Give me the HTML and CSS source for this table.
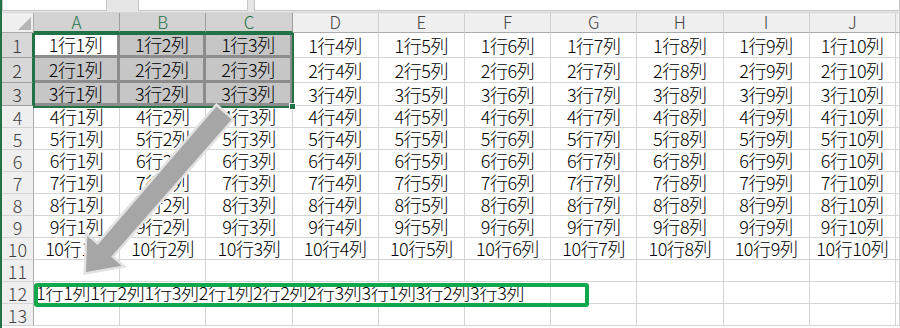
FILE: index.html
```html
<!DOCTYPE html>
<html lang="ja">
<head>
<meta charset="utf-8">
<title>Sheet</title>
<link rel="stylesheet" href="styles.css">
</head>
<body>
<div class="screen">
  <div class="app">
    <div class="topbar">
      <div class="tb-box namebox"></div>
      <div class="tb-box fxbox"></div>
      <div class="tb-box formula"></div>
    </div>
    <div class="sheet">
      <div class="corner"></div>
      <div class="ch sel">A</div><div class="ch sel">B</div><div class="ch sel">C</div><div class="ch">D</div><div class="ch">E</div><div class="ch">F</div><div class="ch">G</div><div class="ch">H</div><div class="ch">I</div><div class="ch">J</div><div class="ch end"></div>

      <div class="rh sel">1</div>
      <div class="c act">1行1列</div><div class="c s">1行2列</div><div class="c s">1行3列</div><div class="c">1行4列</div><div class="c">1行5列</div><div class="c">1行6列</div><div class="c">1行7列</div><div class="c">1行8列</div><div class="c">1行9列</div><div class="c">1行10列</div><div class="c"></div>

      <div class="rh sel">2</div>
      <div class="c s">2行1列</div><div class="c s">2行2列</div><div class="c s">2行3列</div><div class="c">2行4列</div><div class="c">2行5列</div><div class="c">2行6列</div><div class="c">2行7列</div><div class="c">2行8列</div><div class="c">2行9列</div><div class="c">2行10列</div><div class="c"></div>

      <div class="rh sel">3</div>
      <div class="c s">3行1列</div><div class="c s">3行2列</div><div class="c s">3行3列</div><div class="c">3行4列</div><div class="c">3行5列</div><div class="c">3行6列</div><div class="c">3行7列</div><div class="c">3行8列</div><div class="c">3行9列</div><div class="c">3行10列</div><div class="c"></div>

      <div class="rh">4</div>
      <div class="c">4行1列</div><div class="c">4行2列</div><div class="c">4行3列</div><div class="c">4行4列</div><div class="c">4行5列</div><div class="c">4行6列</div><div class="c">4行7列</div><div class="c">4行8列</div><div class="c">4行9列</div><div class="c">4行10列</div><div class="c"></div>

      <div class="rh">5</div>
      <div class="c">5行1列</div><div class="c">5行2列</div><div class="c">5行3列</div><div class="c">5行4列</div><div class="c">5行5列</div><div class="c">5行6列</div><div class="c">5行7列</div><div class="c">5行8列</div><div class="c">5行9列</div><div class="c">5行10列</div><div class="c"></div>

      <div class="rh">6</div>
      <div class="c">6行1列</div><div class="c">6行2列</div><div class="c">6行3列</div><div class="c">6行4列</div><div class="c">6行5列</div><div class="c">6行6列</div><div class="c">6行7列</div><div class="c">6行8列</div><div class="c">6行9列</div><div class="c">6行10列</div><div class="c"></div>

      <div class="rh">7</div>
      <div class="c">7行1列</div><div class="c">7行2列</div><div class="c">7行3列</div><div class="c">7行4列</div><div class="c">7行5列</div><div class="c">7行6列</div><div class="c">7行7列</div><div class="c">7行8列</div><div class="c">7行9列</div><div class="c">7行10列</div><div class="c"></div>

      <div class="rh">8</div>
      <div class="c">8行1列</div><div class="c">8行2列</div><div class="c">8行3列</div><div class="c">8行4列</div><div class="c">8行5列</div><div class="c">8行6列</div><div class="c">8行7列</div><div class="c">8行8列</div><div class="c">8行9列</div><div class="c">8行10列</div><div class="c"></div>

      <div class="rh">9</div>
      <div class="c">9行1列</div><div class="c">9行2列</div><div class="c">9行3列</div><div class="c">9行4列</div><div class="c">9行5列</div><div class="c">9行6列</div><div class="c">9行7列</div><div class="c">9行8列</div><div class="c">9行9列</div><div class="c">9行10列</div><div class="c"></div>

      <div class="rh">10</div>
      <div class="c">10行1列</div><div class="c">10行2列</div><div class="c">10行3列</div><div class="c">10行4列</div><div class="c">10行5列</div><div class="c">10行6列</div><div class="c">10行7列</div><div class="c">10行8列</div><div class="c">10行9列</div><div class="c">10行10列</div><div class="c"></div>

      <div class="rh">11</div>
      <div class="c"></div><div class="c"></div><div class="c"></div><div class="c"></div><div class="c"></div><div class="c"></div><div class="c"></div><div class="c"></div><div class="c"></div><div class="c"></div><div class="c"></div>

      <div class="rh">12</div>
      <div class="c wide">1行1列1行2列1行3列2行1列2行2列2行3列3行1列3行2列3行3列</div><div class="c"></div><div class="c"></div><div class="c"></div><div class="c"></div><div class="c"></div>

      <div class="rh">13</div>
      <div class="c"></div><div class="c"></div><div class="c"></div><div class="c"></div><div class="c"></div><div class="c"></div><div class="c"></div><div class="c"></div><div class="c"></div><div class="c"></div><div class="c"></div>
    </div>
  </div>

  <div class="selbox"></div>
  <div class="handle"></div>
  <div class="hl"></div>
  <svg class="arrow" width="900" height="328" viewBox="0 0 900 328" xmlns="http://www.w3.org/2000/svg">
    <polygon points="216.5,106.5 231.5,119.5 111.2,256.8 121.5,265.8 86,272 87.3,236.0 97.6,245.0"
      fill="#a6a6a6" stroke="#e2e2e2" stroke-width="5" stroke-linejoin="miter" paint-order="stroke"/>
  </svg>
</div>
</body>
</html>
```
FILE: styles.css
```css
* {
  box-sizing: border-box;
  margin: 0;
  padding: 0;
}

html, body {
  width: 900px;
  height: 328px;
  overflow: hidden;
  background: #ffffff;
}

body {
  font-family: "Noto Sans CJK JP", "Noto Sans", sans-serif;
  font-weight: 300;
  color: #000;
}

.screen {
  position: relative;
  width: 900px;
  height: 328px;
}

.app {
  height: 328px;
  border-left: 2px solid #217346;
  display: flex;
  flex-direction: column;
}

/* strip below the formula bar */
.topbar {
  height: 13px;
  background: #e6e6e6;
  display: flex;
  align-items: flex-start;
  border-bottom: 1px solid #d6d6d6;
}

.tb-box {
  height: 11px;
  background: #ffffff;
  border: 1px solid #c6c6c6;
  border-top: none;
}

.namebox {
  width: 105px;
}

.fxbox {
  width: 110px;
  margin-left: 31px;
}

.formula {
  flex: 1;
  margin-left: 6px;
}

/* grid */
.sheet {
  display: grid;
  grid-template-columns: 32px repeat(10, 86.2px) 1fr;
  grid-template-rows: 20px 25px 25px 23px repeat(10, 22px);
}

.corner {
  position: relative;
  background: #efefef;
  border-right: 1px solid #ababab;
  border-bottom: 1px solid #ababab;
}

.corner::after {
  content: "";
  position: absolute;
  right: 2px;
  bottom: 2px;
  width: 0;
  height: 0;
  border-left: 13px solid transparent;
  border-bottom: 13px solid #b5b5b5;
}

.ch {
  background: #efefef;
  color: #444444;
  border-right: 1px solid #d0d0d0;
  border-bottom: 1px solid #ababab;
  text-align: center;
  font-size: 17px;
  line-height: 18px;
}

.ch.sel {
  background: #d2d2d2;
  color: #217346;
  border-right-color: #9e9e9e;
  border-bottom: 2px solid #217346;
}

.rh {
  background: #efefef;
  color: #444444;
  border-right: 1px solid #ababab;
  border-bottom: 1px solid #d4d4d4;
  font-size: 18px;
  line-height: 18px;
  display: flex;
  align-items: center;
  justify-content: center;
}

.rh.sel {
  background: #d7d7d7;
  color: #3a3a3a;
  border-right: 2px solid #217346;
  border-bottom-color: #9e9e9e;
}

.c {
  border-right: 1px solid #d4d4d4;
  border-bottom: 1px solid #d4d4d4;
  font-size: 18px;
  line-height: 19px;
  letter-spacing: -0.4px;
  white-space: nowrap;
  display: flex;
  align-items: center;
  justify-content: center;
  overflow: visible;
}

.c.s {
  background: #c6c6c6;
  border-right: 3px solid #8c8c8c;
  border-bottom: 3px solid #8c8c8c;
}

.c.act {
  background: #ffffff;
  border-right: 3px solid #8c8c8c;
  border-bottom: 3px solid #8c8c8c;
}

.c.wide {
  grid-column: span 6;
  justify-content: flex-start;
  padding-left: 2px;
  letter-spacing: -0.25px;
}

/* overlays */
.selbox {
  position: absolute;
  left: 33px;
  top: 33px;
  width: 261px;
  height: 75px;
  border: 2px solid #217346;
}

.handle {
  position: absolute;
  left: 289px;
  top: 103px;
  width: 7px;
  height: 7px;
  background: #217346;
  border: 1px solid #ffffff;
}

.hl {
  position: absolute;
  left: 34px;
  top: 283px;
  width: 555px;
  height: 24px;
  border: 4px solid #10a84c;
  border-radius: 3px;
}

.arrow {
  position: absolute;
  left: 0;
  top: 0;
  pointer-events: none;
}
```
